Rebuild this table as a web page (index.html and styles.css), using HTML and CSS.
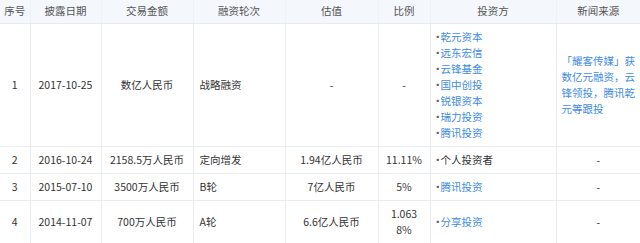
FILE: index.html
```html
<!DOCTYPE html>
<html lang="zh-CN">
<head>
    <meta charset="UTF-8">
    <meta name="viewport" content="width=device-width, initial-scale=1.0">
    <title>融资历程</title>
    <link rel="stylesheet" href="styles.css">
</head>
<body>
    <table class="finance-table">
        <colgroup>
            <col style="width: 30px">
            <col style="width: 71px">
            <col style="width: 92px">
            <col style="width: 92px">
            <col style="width: 93px">
            <col style="width: 52px">
            <col style="width: 126px">
            <col style="width: 84px">
        </colgroup>
        <thead>
            <tr>
                <th>序号</th>
                <th>披露日期</th>
                <th>交易金额</th>
                <th>融资轮次</th>
                <th>估值</th>
                <th>比例</th>
                <th>投资方</th>
                <th>新闻来源</th>
            </tr>
        </thead>
        <tbody>
            <tr>
                <td>1</td>
                <td>2017-10-25</td>
                <td>数亿人民币</td>
                <td class="left">战略融资</td>
                <td>-</td>
                <td>-</td>
                <td class="investors">
                    <div class="investor"><a href="#">乾元资本</a></div>
                    <div class="investor"><a href="#">远东宏信</a></div>
                    <div class="investor"><a href="#">云锋基金</a></div>
                    <div class="investor"><a href="#">国中创投</a></div>
                    <div class="investor"><a href="#">锐银资本</a></div>
                    <div class="investor"><a href="#">瑞力投资</a></div>
                    <div class="investor"><a href="#">腾讯投资</a></div>
                </td>
                <td class="news"><a href="#">「耀客传媒」获数亿元融资，云锋领投，腾讯乾元等跟投</a></td>
            </tr>
            <tr>
                <td>2</td>
                <td>2016-10-24</td>
                <td>2158.5万人民币</td>
                <td class="left">定向增发</td>
                <td>1.94亿人民币</td>
                <td>11.11%</td>
                <td class="investors">
                    <div class="investor">个人投资者</div>
                </td>
                <td>-</td>
            </tr>
            <tr>
                <td>3</td>
                <td>2015-07-10</td>
                <td>3500万人民币</td>
                <td class="left">B轮</td>
                <td>7亿人民币</td>
                <td>5%</td>
                <td class="investors">
                    <div class="investor"><a href="#">腾讯投资</a></div>
                </td>
                <td>-</td>
            </tr>
            <tr>
                <td>4</td>
                <td>2014-11-07</td>
                <td>700万人民币</td>
                <td class="left">A轮</td>
                <td>6.6亿人民币</td>
                <td class="ratio">1.0638%</td>
                <td class="investors">
                    <div class="investor"><a href="#">分享投资</a></div>
                </td>
                <td>-</td>
            </tr>
        </tbody>
    </table>
</body>
</html>
```

FILE: styles.css
```css
body {
    margin: 0;
    background-color: #fff;
    font-family: "Noto Sans CJK SC", "Liberation Sans", sans-serif;
    font-size: 10.5px;
    color: #333;
}
.finance-table {
    width: 640px;
    table-layout: fixed;
    border-collapse: collapse;
}
th, td {
    padding: 5px 3px;
    line-height: 16px;
    text-align: center;
    vertical-align: middle;
    border-left: 1px solid #e9edf2;
    border-bottom: 1px solid #e9edf2;
}
th:first-child, td:first-child {
    border-left: none;
}
th {
    height: 13px;
    padding: 3px 3px 4px;
    background-color: #f4f7fb;
    font-weight: normal;
    color: #555;
    border-left-color: #eef2f7;
    border-bottom-color: #e6ebf1;
}
td.left {
    text-align: left;
    padding-left: 6px;
}
td.ratio {
    word-break: break-all;
    padding: 5px 6px;
}
a {
    color: #3d8be4;
    text-decoration: none;
}
td.investors {
    text-align: left;
    padding-left: 2px;
}
.investor::before {
    content: "·";
    display: inline-block;
    width: 8px;
    text-align: center;
    color: #555;
}
td.news {
    text-align: left;
    padding: 5px 4px 5px 5px;
}
```
